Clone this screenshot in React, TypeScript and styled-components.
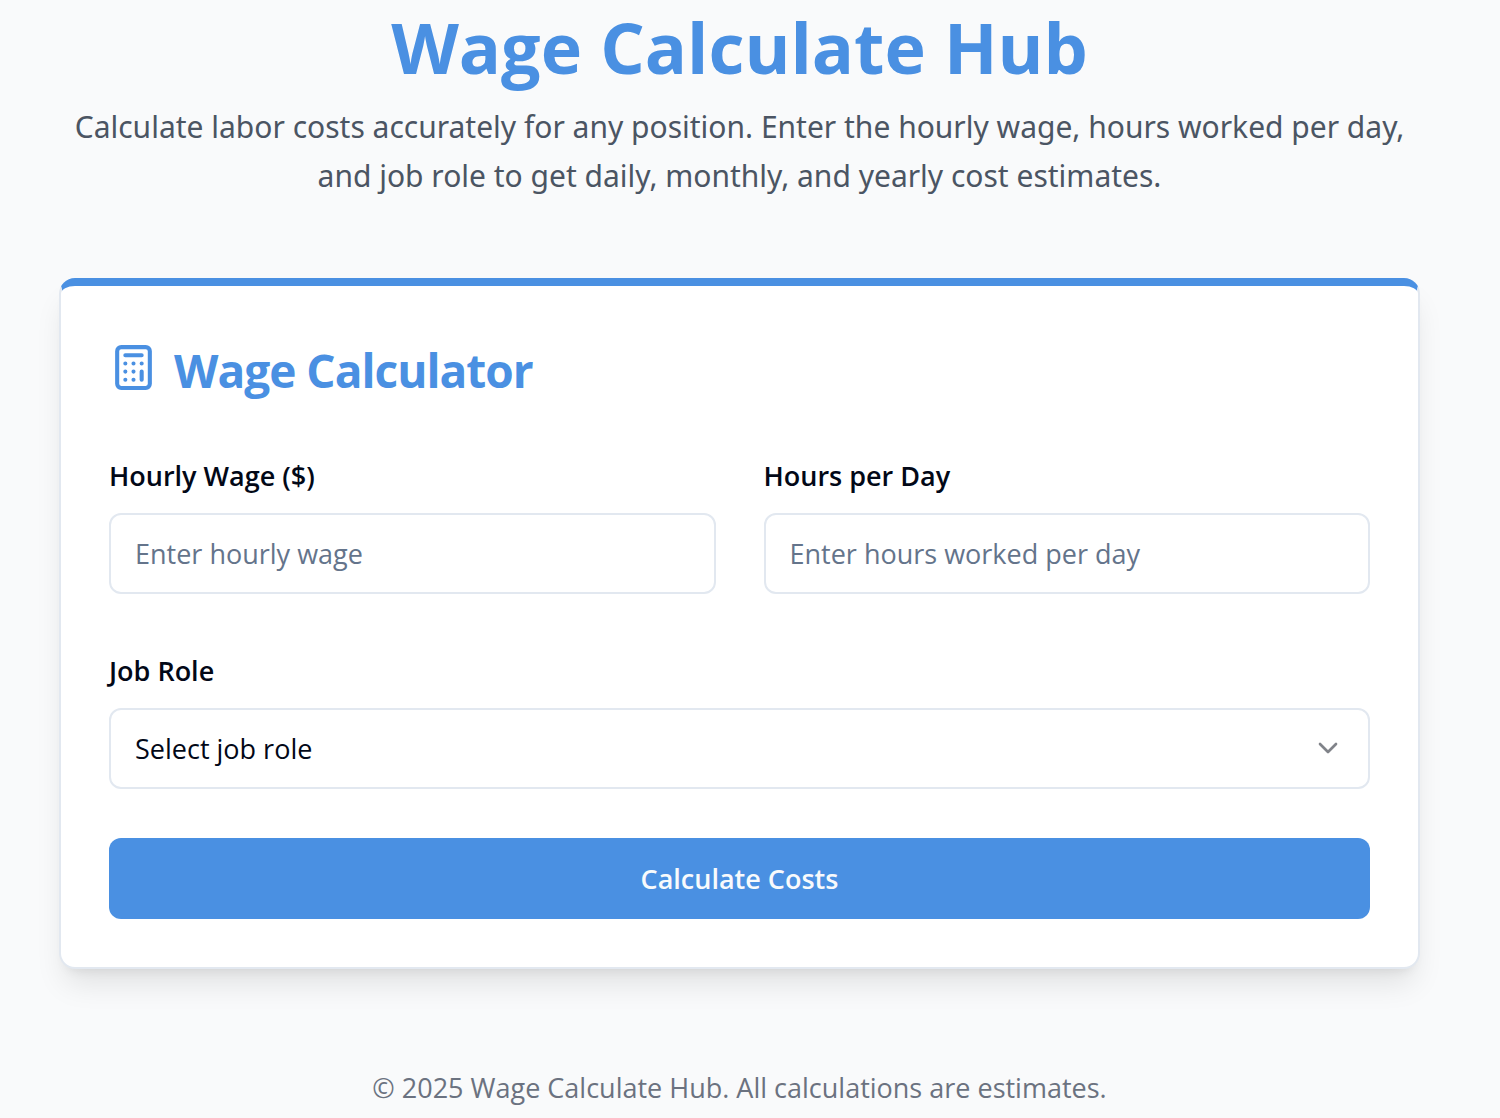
import React, { useState } from "react";
import styled, { createGlobalStyle } from "styled-components";
import { ChevronDown } from "lucide-react";

const GlobalStyle = createGlobalStyle`
  *, *::before, *::after { box-sizing: border-box; }
  body {
    margin: 0;
    background: #f9fafb;
    color: #020817;
    font-family: "Segoe UI", "Open Sans", "Noto Sans", sans-serif;
    font-size: 27px;
    line-height: 42px;
  }
  h1, h2, p { margin: 0; }
`;

const Page = styled.div`
  padding: 8px 80px 8px 59px;
`;

const Header = styled.header`
  text-align: center;
  margin-bottom: 78px;
`;

const Title = styled.h1`
  color: #4a90e2;
  font-size: 70px;
  line-height: 78px;
  font-weight: 700;
  margin-bottom: 16px;
`;

const Intro = styled.p`
  color: #4b5563;
  font-family: "Segoe UI", "Noto Sans", sans-serif;
  font-size: 30px;
  line-height: 49px;
`;

const Card = styled.main`
  background: #fff;
  border: 2px solid #e2e8f0;
  border-top: 8px solid #4a90e2;
  border-radius: 16px;
  padding: 48px;
  box-shadow: 0 20px 30px -6px rgba(0, 0, 0, 0.1), 0 8px 12px -8px rgba(0, 0, 0, 0.1);
`;

const CardTitle = styled.h2`
  display: flex;
  align-items: center;
  gap: 16px;
  color: #4a90e2;
  font-size: 46px;
  line-height: 72px;
  font-weight: 700;
  letter-spacing: -1px;
  margin-bottom: 49px;

  svg { margin-bottom: 6px; }
`;

const Fields = styled.div`
  display: grid;
  gap: 56px;
`;

const Pair = styled.div`
  display: grid;
  grid-template-columns: 1fr 1fr;
  gap: 48px;
`;

const Field = styled.div`
  display: grid;
  gap: 16px;
`;

const Label = styled.label`
  font-weight: 600;
`;

const control = `
  width: 100%;
  height: 81px;
  padding: 0 24px;
  border: 2px solid #e2e8f0;
  border-radius: 12px;
  background: #fff;
  color: #020817;
  font: inherit;
`;

const Input = styled.input`
  ${control}
  &::placeholder { color: #64748b; opacity: 1; }
`;

const SelectBox = styled.div`
  position: relative;
`;

const Select = styled.select`
  ${control}
  appearance: none;
`;

const Chevron = styled(ChevronDown)`
  position: absolute;
  right: 26px;
  top: 24px;
  color: #808389;
  pointer-events: none;
`;

const Submit = styled.button`
  display: block;
  width: 100%;
  height: 81px;
  margin-top: 49px;
  border: 0;
  border-radius: 12px;
  background: #4a90e2;
  color: #f8fafc;
  font: inherit;
  font-weight: 600;
`;

const Footer = styled.footer`
  margin-top: 98px;
  text-align: center;
  color: #6b7280;
`;

const CalculatorIcon = () => (
  <svg width="49" height="49" viewBox="0 0 24 24" fill="none" stroke="currentColor" strokeWidth="2" strokeLinecap="round" strokeLinejoin="round" aria-hidden="true">
    <rect width="16" height="20" x="4" y="2" rx="2" />
    <path d="M8 6h8M16 14v4M16 10h.01M12 10h.01M8 10h.01M12 14h.01M8 14h.01M12 18h.01M8 18h.01" />
  </svg>
);

export default function App() {
  const [role, setRole] = useState("");
  return (
    <>
      <GlobalStyle />
      <Page>
        <Header>
          <Title>Wage Calculate Hub</Title>
          <Intro>
            Calculate labor costs accurately for any position. Enter the hourly wage, hours worked per day, and job role to get daily, monthly, and yearly cost estimates.
          </Intro>
        </Header>
        <Card>
          <CardTitle><CalculatorIcon />Wage Calculator</CardTitle>
          <form onSubmit={(e) => e.preventDefault()}>
            <Fields>
              <Pair>
                <Field>
                  <Label htmlFor="wage">Hourly Wage ($)</Label>
                  <Input id="wage" inputMode="decimal" placeholder="Enter hourly wage" />
                </Field>
                <Field>
                  <Label htmlFor="hours">Hours per Day</Label>
                  <Input id="hours" inputMode="decimal" placeholder="Enter hours worked per day" />
                </Field>
              </Pair>
              <Field>
                <Label htmlFor="role">Job Role</Label>
                <SelectBox>
                  <Select id="role" value={role} onChange={(e) => setRole(e.target.value)}>
                    <option value="">Select job role</option>
                  </Select>
                  <Chevron size={32} />
                </SelectBox>
              </Field>
            </Fields>
            <Submit type="submit">Calculate Costs</Submit>
          </form>
        </Card>
        <Footer>© 2025 Wage Calculate Hub. All calculations are estimates.</Footer>
      </Page>
    </>
  );
}
